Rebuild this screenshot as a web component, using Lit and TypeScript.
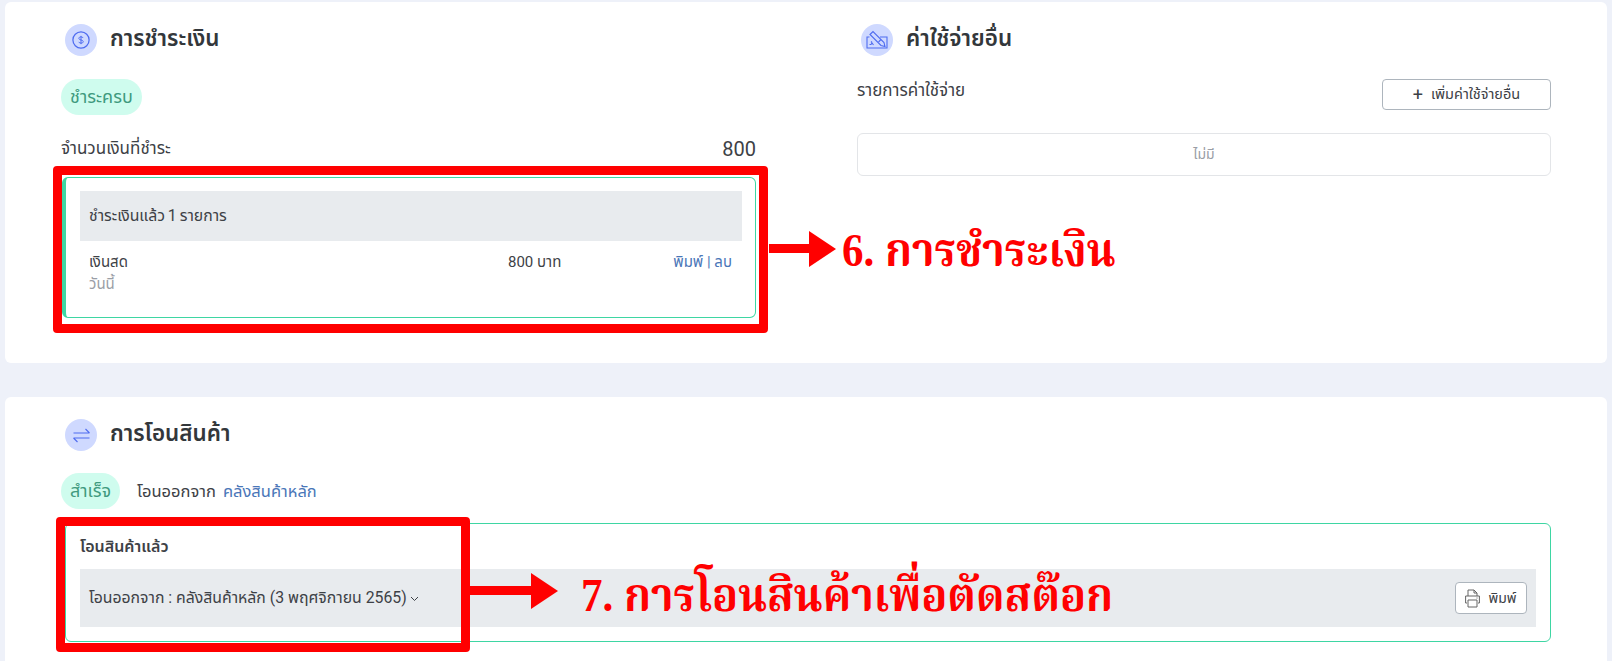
import { LitElement, html, css, svg } from "lit";
import { customElement } from "lit/decorators.js";

const dollar = svg`<circle cx="8" cy="8" r="7.200"/><path d="M10.400 5.800c-.3-.8-1.200-1.300-2.400-1.300-1.400 0-2.400.7-2.400 1.700 0 2.300 4.900 1.200 4.900 3.600 0 1-1 1.700-2.500 1.700-1.300 0-2.200-.5-2.500-1.400M8 3.400v9.200" transform="translate(1.600 1.600) scale(.8)"/>`;
const cheque = svg`<path d="M3.500 7H1v11h20V7h-7"/><path d="M4 4.500 7 1.500 18 12.500 19 16.500 15 15.500z"/><path d="M15 9.500 12.500 12"/><path d="M3.500 14.500h1.500l1-1.500 1.500 2M5 11.500l1 1"/>`;
const swap = svg`<path d="M.5 5h16M12.500 1l4 4M16.500 10H.5M4.500 14l-4-4"/>`;
const printer = svg`<path d="M3 7V1h6l3 3v3M9 1v3h3"/><path d="M2 14H.6V7h13.800v7H13"/><path d="M3 11h9v7H3z"/><path d="M11.500 9h1"/>`;

@customElement("app-root")
export class AppRoot extends LitElement {
  static styles = css`
    :host { display: block; position: relative; width: 1612px; height: 661px; overflow: hidden; background: #eef1f9; font-family: Roboto, "Noto Sans Thai", "Noto Sans", sans-serif; color: #3d4146; font-size: 16px; }
    .page { display: flex; flex-direction: column; gap: 34px; padding: 2px 5px 0; }
    .card { background: #fff; border-radius: 6px; padding: 22px 56px 0; }
    .card.top { height: 339px; display: grid; grid-template-columns: 695px 694px; column-gap: 101px; }
    .card.bottom { height: 300px; }
    .head { display: flex; align-items: center; gap: 13px; height: 32px; padding-left: 4px; }
    .circle { width: 32px; height: 32px; border-radius: 50%; background: #cfd9ff; display: flex; align-items: center; justify-content: center; flex: none; }
    .circle svg { fill: none; stroke: #4f6cf0; stroke-width: 1.100; }
    h2 { margin: 0 0 4px; font-size: 22.400px; line-height: 28px; font-weight: 600; color: #33373b; }
    .pill { display: inline-flex; align-items: center; height: 36px; padding: 0 9px; border-radius: 18px; background: #cffcee; color: #3f9a7e; font-size: 18px; box-sizing: border-box; }
    .status { margin-top: 23px; display: flex; }
    .amount { margin-top: 21px; display: flex; justify-content: space-between; align-items: center; height: 26px; font-size: 17px; }
    .amount b { font-weight: 400; font-size: 20px; }
    .paid { margin-top: 15px; margin-left: 1px; height: 141px; box-sizing: border-box; border: 1px solid #3ed6a3; border-left-width: 4px; border-radius: 6px; padding: 13px 13px 0 14px; }
    .bar { background: #e8ebee; display: flex; align-items: center; font-size: 15.800px; }
    .paid .bar { height: 50px; padding: 0 9px; word-spacing: -1px; }
    .line { display: grid; grid-template-columns: 1fr 55px 169px; padding: 10px 10px 0 9px; line-height: 22px; font-size: 15px; }
    .line .mid { white-space: nowrap; }
    .line .act { text-align: right; color: #4a76b8; }
    .muted { color: #9a9ea6; }
    .expense-top { margin-top: 23px; display: flex; justify-content: space-between; }
    .expense-top span { line-height: 22px; font-size: 17px; }
    .btn { display: inline-flex; align-items: center; justify-content: center; gap: 8px; box-sizing: border-box; border: 1px solid #adb5bd; border-radius: 4px; background: #fff; color: #3d4146; font: inherit; font-size: 14.500px; padding: 0; }
    .add { width: 169px; height: 31px; }
    .add i { font-style: normal; font-size: 18px; line-height: 1; }
    .empty { margin-top: 23px; height: 43px; box-sizing: border-box; border: 1px solid #e3e5e8; border-radius: 6px; display: flex; align-items: center; justify-content: center; color: #9a9ea6; font-size: 14px; }
    .transfer-status { margin-top: 22px; display: flex; align-items: center; gap: 17px; font-size: 16.500px; word-spacing: 3px; }
    .transfer-status a { color: #4a76b8; }
    .moved { margin-top: 14px; height: 119px; box-sizing: border-box; border: 1px solid #3ed6a3; border-radius: 6px; padding: 0 14px; margin-left: 4px; }
    .moved h3 { margin: 0; font-size: 16px; font-weight: 600; line-height: 45px; }
    .moved .bar { height: 58px; padding: 0 9px; justify-content: space-between; }
    .caret { display: inline-flex; margin-left: 3px; vertical-align: middle; }
    .caret svg { fill: none; stroke: #3d4146; stroke-width: 1; }
    .print { width: 72px; height: 32px; gap: 8px; font-size: 14px; }
    .print svg { fill: none; stroke: #666; stroke-width: 1; }
    .frame { position: absolute; box-sizing: border-box; border: 9px solid #f00; border-radius: 4px; }
    .f1 { left: 53px; top: 166px; width: 715px; height: 167px; }
    .f2 { left: 56px; top: 517px; width: 414px; height: 135px; }
    .arrow { position: absolute; fill: #f00; }
    .note { position: absolute; color: #f00; font-family: "Liberation Serif", "Noto Serif Thai", serif; font-weight: 700; font-size: 47px; line-height: 60px; white-space: nowrap; transform: scaleX(.915); transform-origin: left center; }
  `;
  render() {
    return html`
      <div class="page">
        <section class="card top">
          <div>
            <div class="head"><span class="circle"><svg width="18" height="18" viewBox="0 0 16 16">${dollar}</svg></span><h2>การชำระเงิน</h2></div>
            <div class="status"><span class="pill">ชำระครบ</span></div>
            <div class="amount"><span>จำนวนเงินที่ชำระ</span><b>800</b></div>
            <div class="paid">
              <div class="bar">ชำระเงินแล้ว 1 รายการ</div>
              <div class="line">
                <div>เงินสด<br /><span class="muted">วันนี้</span></div>
                <div class="mid">800 บาท</div>
                <div class="act">พิมพ์ | ลบ</div>
              </div>
            </div>
          </div>
          <div class="right">
            <div class="head"><span class="circle"><svg width="22" height="20" viewBox="0 0 22 20">${cheque}</svg></span><h2>ค่าใช้จ่ายอื่น</h2></div>
            <div class="expense-top"><span>รายการค่าใช้จ่าย</span><button class="btn add"><i>+</i>เพิ่มค่าใช้จ่ายอื่น</button></div>
            <div class="empty">ไม่มี</div>
          </div>
        </section>
        <section class="card bottom">
          <div class="head"><span class="circle"><svg width="17" height="15" viewBox="0 0 17 15">${swap}</svg></span><h2>การโอนสินค้า</h2></div>
          <div class="transfer-status"><span class="pill">สำเร็จ</span><span>โอนออกจาก <a>คลังสินค้าหลัก</a></span></div>
          <div class="moved">
            <h3>โอนสินค้าแล้ว</h3>
            <div class="bar">
              <span>โอนออกจาก : คลังสินค้าหลัก (3 พฤศจิกายน 2565)<span class="caret"><svg width="9" height="6" viewBox="0 0 9 6"><path d="M1 1l3.500 3.500L8 1"/></svg></span></span>
              <button class="btn print"><svg width="15" height="19" viewBox="0 0 15 19">${printer}</svg>พิมพ์</button>
            </div>
          </div>
        </section>
      </div>
      <div class="frame f1"></div>
      <div class="frame f2"></div>
      <svg class="arrow" style="left:769px;top:231px" width="68" height="36" viewBox="0 0 68 36"><path d="M0 13h40V0l27 18-27 18V22H0z"/></svg>
      <svg class="arrow" style="left:469px;top:573px" width="90" height="36" viewBox="0 0 90 36"><path d="M0 13h62V0l27 18-27 18V22H0z"/></svg>
      <div class="note" style="left:842px;top:220px">6. การชำระเงิน</div>
      <div class="note" style="left:581px;top:565px">7. การโอนสินค้าเพื่อตัดสต๊อก</div>
    `;
  }
}
